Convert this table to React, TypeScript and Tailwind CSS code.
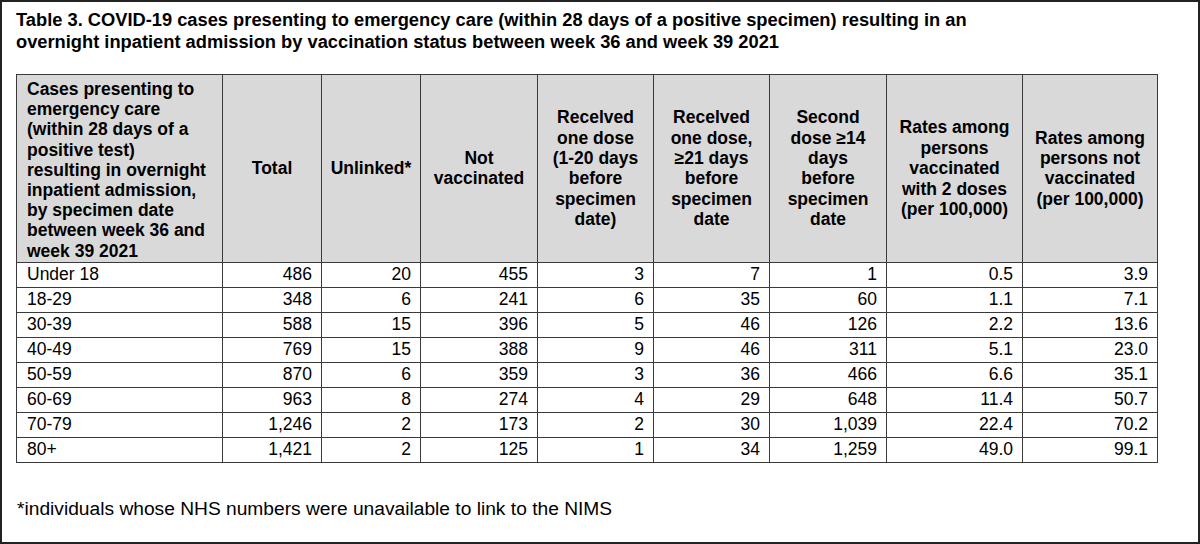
import React from 'react'

const headers: string[][] = [
  ['Total'],
  ['Unlinked*'],
  ['Not', 'vaccinated'],
  ['Recelved', 'one dose', '(1-20 days', 'before', 'specimen', 'date)'],
  ['Recelved', 'one dose,', '≥21 days', 'before', 'specimen', 'date'],
  ['Second', 'dose ≥14', 'days', 'before', 'specimen', 'date'],
  ['Rates among', 'persons', 'vaccinated', 'with 2 doses', '(per 100,000)'],
  ['Rates among', 'persons not', 'vaccinated', '(per 100,000)'],
]

const rows: string[][] = [
  ['Under 18', '486', '20', '455', '3', '7', '1', '0.5', '3.9'],
  ['18-29', '348', '6', '241', '6', '35', '60', '1.1', '7.1'],
  ['30-39', '588', '15', '396', '5', '46', '126', '2.2', '13.6'],
  ['40-49', '769', '15', '388', '9', '46', '311', '5.1', '23.0'],
  ['50-59', '870', '6', '359', '3', '36', '466', '6.6', '35.1'],
  ['60-69', '963', '8', '274', '4', '29', '648', '11.4', '50.7'],
  ['70-79', '1,246', '2', '173', '2', '30', '1,039', '22.4', '70.2'],
  ['80+', '1,421', '2', '125', '1', '34', '1,259', '49.0', '99.1'],
]

// widths of the nine columns, first one is the label column
const colW = ['w-[206px]', 'w-[99px]', 'w-[99px]', 'w-[117px]', 'w-[116px]', 'w-[116px]', 'w-[117px]', 'w-[136px]', 'w-[135px]']

export default function App() {
  return (
    <div className="w-[1200px] h-[544px] bg-white border-2 border-[#222] font-['Liberation_Sans',Arial,sans-serif] text-black overflow-hidden">
      <h1 className="pl-[14px] pt-[7px] text-[18.3px] leading-[22px] font-bold">
        Table 3. COVID-19 cases presenting to emergency care (within 28 days of a positive specimen) resulting in an
        <br />
        overnight inpatient admission by vaccination status between week 36 and week 39 2021
      </h1>

      <table className="ml-[14px] mt-[21px] border-collapse table-fixed text-[17.5px]">
        <colgroup>
          {colW.map((w, i) => (
            <col key={i} className={w} />
          ))}
        </colgroup>
        <thead>
          <tr className="bg-[#d9d9d9]">
            <th className="border border-[#3a3a3a] px-[10px] pt-[4px] pb-[1px] text-left align-top font-bold leading-[20.2px]">
              Cases presenting to emergency care (within 28 days of a positive test) resulting in overnight inpatient admission, by specimen date between week 36 and week 39 2021
            </th>
            {headers.map((h) => (
              <th key={h.join()} className="border border-[#3a3a3a] px-[2px] text-center align-middle font-bold leading-[20.4px]">
                {h.map((line) => (
                  <div key={line}>{line}</div>
                ))}
              </th>
            ))}
          </tr>
        </thead>
        <tbody>
          {rows.map((r) => (
            <tr key={r[0]} className="h-[25px]">
              {r.map((c, i) => (
                <td
                  key={i}
                  className={
                    i === 0
                      ? 'border border-[#3a3a3a] px-[10px] py-0 text-left leading-[23px]'
                      : 'border border-[#3a3a3a] pr-[9px] py-0 text-right leading-[23px]'
                  }
                >
                  {c}
                </td>
              ))}
            </tr>
          ))}
        </tbody>
      </table>

      <p className="pl-[15px] mt-[35px] text-[19.2px] leading-[22px]">
        *individuals whose NHS numbers were unavailable to link to the NIMS
      </p>
    </div>
  )
}
